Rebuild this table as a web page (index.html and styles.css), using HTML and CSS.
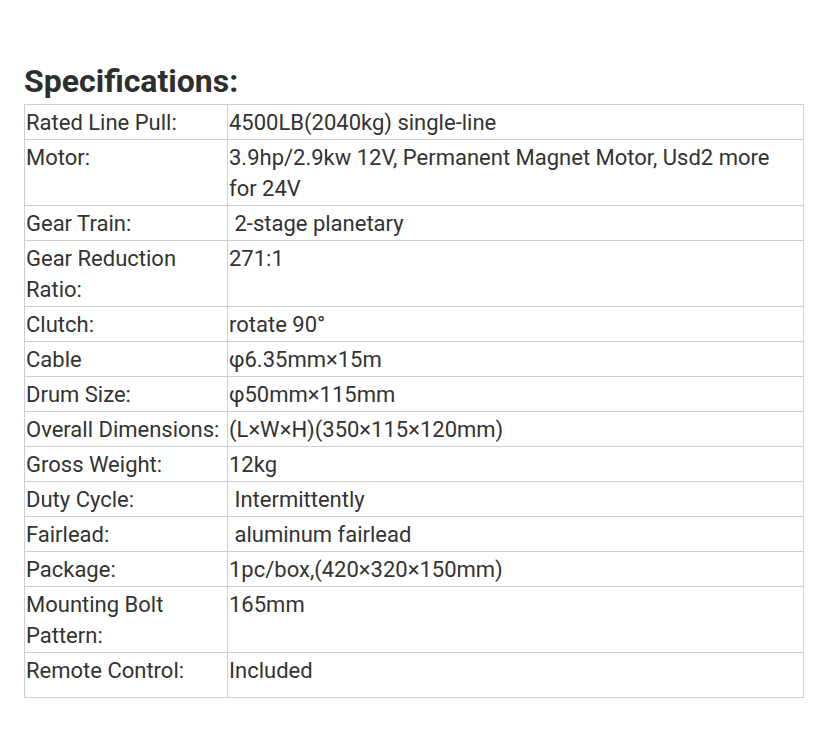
FILE: index.html
```html
<!DOCTYPE html>
<html>
<head>
<meta charset="utf-8">
<link rel="stylesheet" href="styles.css">
</head>
<body>
<div class="page">
  <h2 class="title">Specifications:</h2>
  <table class="spec">
    <tbody>
      <tr><td class="k">Rated Line Pull:</td><td class="v">4500LB(2040kg) single-line</td></tr>
      <tr><td class="k">Motor:</td><td class="v">3.9hp/2.9kw 12V, Permanent Magnet Motor, Usd2 more for 24V</td></tr>
      <tr><td class="k">Gear Train:</td><td class="v">&nbsp;2-stage planetary</td></tr>
      <tr><td class="k">Gear Reduction Ratio:</td><td class="v">271:1</td></tr>
      <tr><td class="k">Clutch:</td><td class="v">rotate 90°</td></tr>
      <tr><td class="k">Cable</td><td class="v">φ6.35mm×15m</td></tr>
      <tr><td class="k">Drum Size:</td><td class="v">φ50mm×115mm</td></tr>
      <tr><td class="k">Overall Dimensions:</td><td class="v">(L×W×H)(350×115×120mm)</td></tr>
      <tr><td class="k">Gross Weight:</td><td class="v">12kg</td></tr>
      <tr><td class="k">Duty Cycle:</td><td class="v">&nbsp;Intermittently</td></tr>
      <tr><td class="k">Fairlead:</td><td class="v">&nbsp;aluminum fairlead</td></tr>
      <tr><td class="k">Package:</td><td class="v">1pc/box,(420×320×150mm)</td></tr>
      <tr><td class="k">Mounting Bolt Pattern:</td><td class="v">165mm</td></tr>
      <tr class="last"><td class="k">Remote Control:</td><td class="v">Included</td></tr>
    </tbody>
  </table>
</div>
</body>
</html>
```
FILE: styles.css
```css
html, body {
  margin: 0;
  padding: 0;
  background: #ffffff;
}
.page {
  padding: 61px 16px 0 24px;
  font-family: Roboto, "Liberation Sans", Arial, sans-serif;
  color: #333333;
}
.title {
  margin: 0 0 3px 0;
  font-size: 32px;
  line-height: 40px;
  font-weight: 700;
  color: #2e2e2e;
}
.spec {
  border-collapse: collapse;
  width: 780px;
  table-layout: fixed;
  font-size: 22px;
  line-height: 31px;
}
.spec td {
  border: 1px solid #cfcfcf;
  padding: 2px 2px 1px 1px;
  vertical-align: top;
  text-align: left;
}
.spec td.k {
  width: 199px;
}
.spec tr.last td {
  padding-bottom: 11px;
}
```
